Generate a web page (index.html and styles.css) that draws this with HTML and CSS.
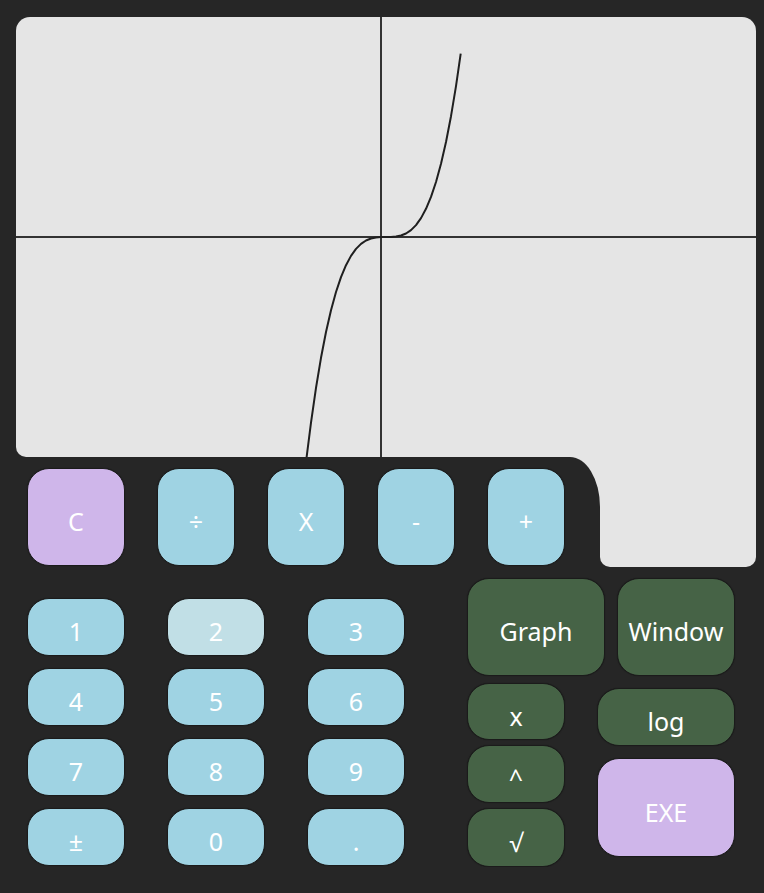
FILE: index.html
```html
<!DOCTYPE html>
<html lang="en">
<head>
<meta charset="utf-8">
<title>Graphing Calculator</title>
<link rel="stylesheet" href="styles.css">
</head>
<body>
<div class="calc">
  <div class="display">
    <div class="screen">
      <svg class="plot" width="740" height="440" viewBox="0 0 740 440">
        <line class="axis" x1="365" y1="0" x2="365" y2="440"/>
        <line class="axis" x1="0" y1="220" x2="740" y2="220"/>
        <polyline class="curve" points="290.6,440.2 295,405.6 300,370.9 305,340.8 310,315 315,293.2 320,275 325,260.1 330,248.2 335,238.9 340,231.9 345,226.9 350,223.5 355,221.5 360,220.4 365,220.1 370,220 375,219.9 380,219.6 385,218.5 390,216.5 395,213.1 400,208.1 405,201.1 410,191.8 415,179.9 420,165 425,146.8 430,125 435,99.2 440,69.1 444.7,36.6"/>
      </svg>
    </div>
    <div class="display-row">
      <div class="ops-wrap">
        <div class="ops">
          <button class="btn purple op-c">C</button>
          <button class="btn blue op">÷</button>
          <button class="btn blue op">X</button>
          <button class="btn blue op">-</button>
          <button class="btn blue op">+</button>
        </div>
      </div>
      <div class="screen-tail"></div>
    </div>
  </div>
  <div class="keys">
    <div class="numpad">
      <button class="btn blue">1</button>
      <button class="btn blue active">2</button>
      <button class="btn blue">3</button>
      <button class="btn blue">4</button>
      <button class="btn blue">5</button>
      <button class="btn blue">6</button>
      <button class="btn blue">7</button>
      <button class="btn blue">8</button>
      <button class="btn blue">9</button>
      <button class="btn blue">±</button>
      <button class="btn blue">0</button>
      <button class="btn blue">.</button>
    </div>
    <div class="fn">
      <div class="fn-top">
        <button class="btn green graph">Graph</button>
        <button class="btn green window">Window</button>
      </div>
      <div class="fn-bottom">
        <div class="fn-col-a">
          <button class="btn green k-x">x</button>
          <button class="btn green k-pow">^</button>
          <button class="btn green k-sqrt">√</button>
        </div>
        <div class="fn-col-b">
          <button class="btn green k-log">log</button>
          <button class="btn purple k-exe">EXE</button>
        </div>
      </div>
    </div>
  </div>
</div>
</body>
</html>
```
FILE: styles.css
```css
html, body {
  margin: 0;
  padding: 0;
  background: #262626;
}

body {
  font-family: "Noto Sans", "Open Sans", sans-serif;
}

.calc {
  padding: 17px 8px 0 16px;
}

.screen {
  height: 440px;
  background: #e5e5e5;
  border-radius: 14px 14px 0 10px;
  overflow: hidden;
}

.plot {
  display: block;
}

.axis {
  stroke: #333333;
  stroke-width: 2;
}

.curve {
  fill: none;
  stroke: #1f1f1f;
  stroke-width: 2;
  stroke-linejoin: round;
}

.display-row {
  display: flex;
  height: 110px;
}

.ops-wrap {
  width: 584px;
  background: #e5e5e5;
}

.ops {
  height: 100%;
  box-sizing: border-box;
  background: #262626;
  border-top-right-radius: 30px 50px;
  display: flex;
  align-items: flex-start;
  gap: 32px;
  padding: 11px 0 0 11px;
}

.screen-tail {
  flex: 1;
  background: #e5e5e5;
  border-radius: 0 0 10px 10px;
}

.btn {
  box-sizing: border-box;
  margin: 0;
  padding: 8px 0 0 0;
  border: 1px solid #1b1b1b;
  border-radius: 22px;
  color: #ffffff;
  font-family: inherit;
  font-size: 25px;
  line-height: 1.2;
  display: flex;
  align-items: center;
  justify-content: center;
  box-shadow: 0 0 1px rgba(0, 0, 0, 0.5);
}

.blue { background: #9fd3e3; }
.blue.active { background: #c1dfe6; }
.purple { background: #cfb6ea; }
.green { background: #466346; }

.op-c { width: 98px; height: 98px; }
.op { width: 78px; height: 98px; }

.keys {
  display: flex;
  align-items: flex-start;
  padding-left: 11px;
}

.numpad {
  display: grid;
  grid-template-columns: repeat(3, 98px);
  grid-auto-rows: 58px;
  column-gap: 42px;
  row-gap: 12px;
  margin-top: 31px;
}

.fn {
  margin-left: 62px;
  margin-top: 11px;
}

.fn-top {
  display: flex;
  gap: 12px;
}

.graph { width: 138px; height: 98px; }
.window { width: 118px; height: 98px; }

.fn-bottom {
  display: flex;
  align-items: flex-start;
  gap: 32px;
}

.fn-col-a {
  display: flex;
  flex-direction: column;
  gap: 5px;
  margin-top: 7px;
}

.k-x { width: 98px; height: 57px; }
.k-pow { width: 98px; height: 58px; }
.k-sqrt { width: 98px; height: 59px; }

.fn-col-b {
  display: flex;
  flex-direction: column;
  gap: 12px;
  margin-top: 12px;
}

.k-log { width: 138px; height: 58px; }
.k-exe { width: 138px; height: 99px; }
```
